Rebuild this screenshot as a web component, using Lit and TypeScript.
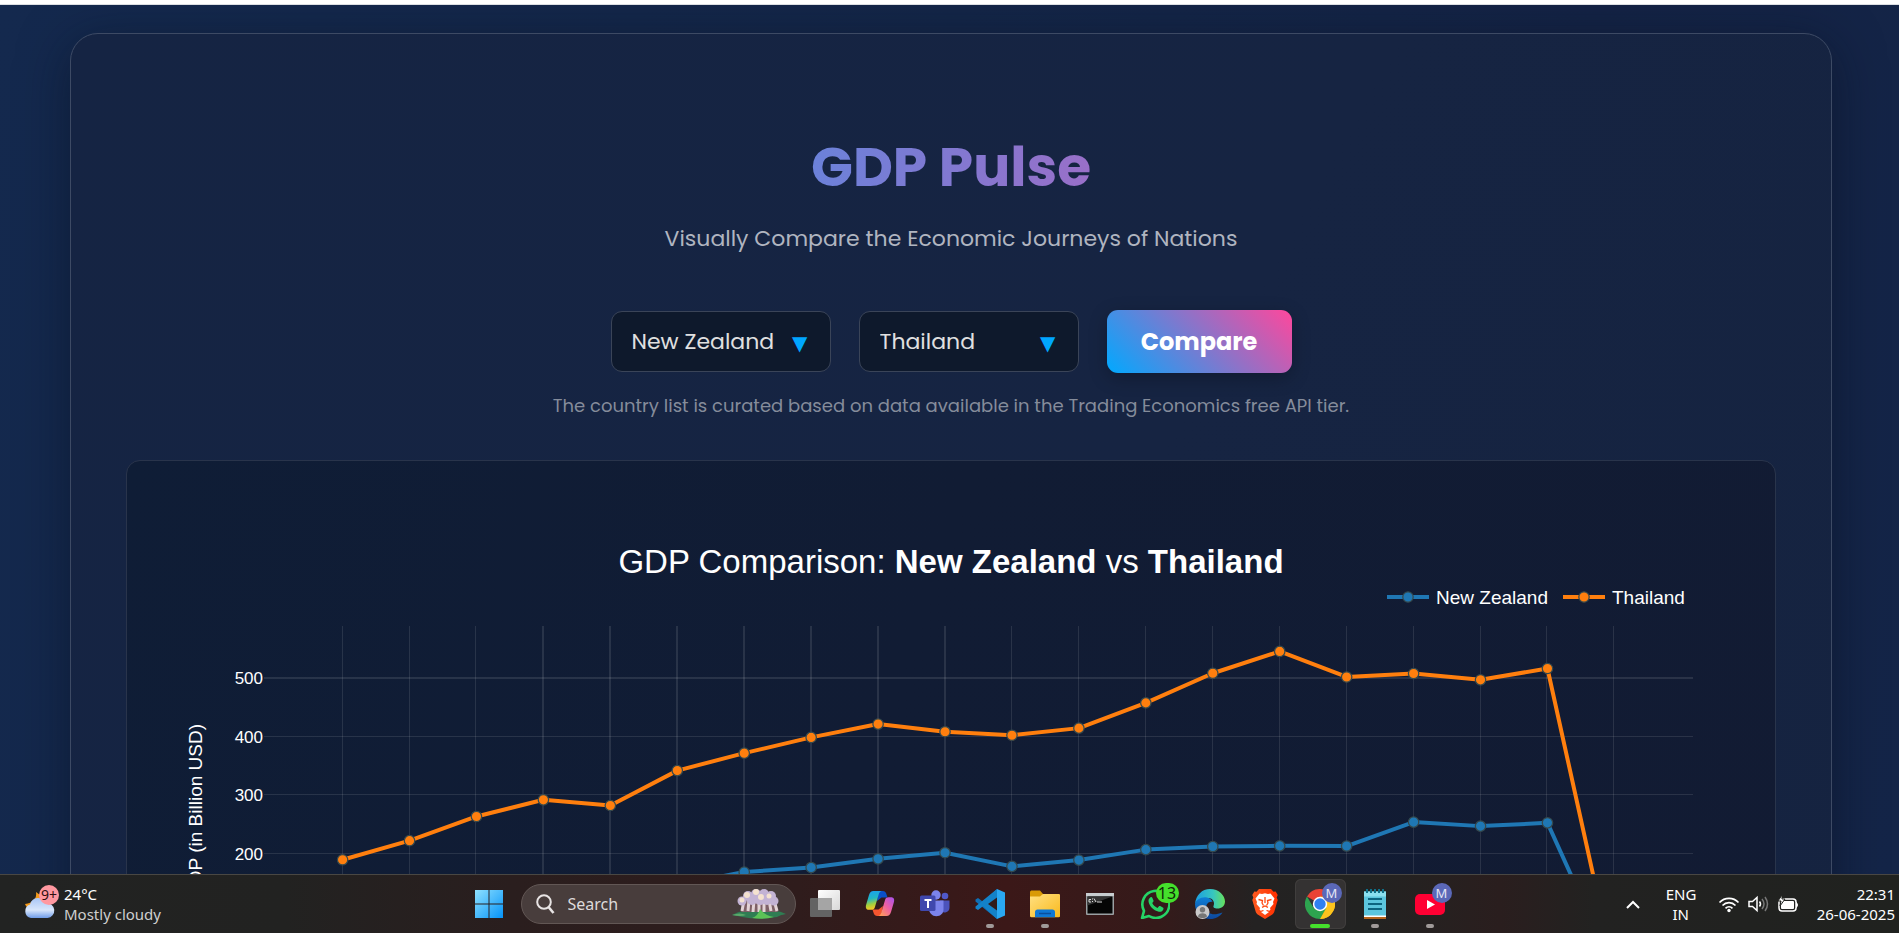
import { LitElement, html, css, svg, nothing } from "lit";
import { customElement, property, state } from "lit/decorators.js";

interface Series {
  name: string;
  color: string;
  values: number[];
}

const SERIES: Series[] = [
  {
    name: "New Zealand",
    color: "#1f77b4",
    values: [114.7, 111.6, 137.3, 133.1, 121.3, 146.5, 168.5, 176.2, 190.9, 201.3, 178.1, 188.8, 206.6, 211.9, 213, 212.7, 253.5, 246.6, 252.2, 0],
  },
  {
    name: "Thailand",
    color: "#ff7f0e",
    values: [189.3, 221.8, 263, 291.4, 281.7, 341.1, 370.8, 397.6, 420.3, 407.3, 401.3, 413.4, 456.4, 506.8, 544, 500.5, 506.3, 495.6, 514.9, 0],
  },
];

@customElement("gdp-chart")
export class GdpChart extends LitElement {
  @property({ attribute: false }) series: Series[] = [];
  @state() private w = 1648;
  private observer?: ResizeObserver;

  static styles = css`
    :host { display: block; }
    svg { display: block; width: 100%; height: 640px; font-family: "Liberation Sans", Arial, sans-serif; fill: #fff; }
    .title { font-size: 33px; }
    .strong { font-weight: 700; }
    .legend { font-size: 19px; }
    .tick { font-size: 17px; }
    .axis { font-size: 19px; }
    .grid { fill: rgba(255, 255, 255, 0.1); }
    .line { fill: none; stroke-width: 4; stroke-linejoin: round; }
    .dot { stroke: #35494d; stroke-width: 1.25; }
  `;

  connectedCallback() {
    super.connectedCallback();
    this.observer = new ResizeObserver(([e]) => (this.w = Math.round(e.contentRect.width)));
    this.observer.observe(this);
  }
  disconnectedCallback() {
    super.disconnectedCallback();
    this.observer?.disconnect();
  }

  render() {
    const left = 137;
    const right = this.w - 82;
    const top = 165;
    const zero = 510;
    const unit = 0.5875;
    const inset = (right - left) * 0.055;
    const step = (right - left - inset * 2) / 19;
    const x = (i: number) => left + inset + i * step;
    const y = (v: number) => zero - v * unit;
    const years = [...Array(20).keys()];
    const lx = this.w - 388;
    return html`<svg role="img" aria-label="GDP comparison line chart">
      <text class="title" x=${this.w / 2} y="112" text-anchor="middle">GDP Comparison: <tspan class="strong">${this.series[0].name}</tspan> vs <tspan class="strong">${this.series[1].name}</tspan></text>
      ${years.map((i) => svg`<rect class="grid" x=${Math.floor(x(i) - 0.5)} y=${top} width=${i > 2 && i < 10 ? 2 : 1} height=${zero - top}></rect>`)}
      ${[0, 100, 200, 300, 400, 500].map((v) => svg`
        <rect class="grid" x=${left} y=${Math.floor(y(v))} width=${right - left} height=${v === 500 ? 2 : 1}></rect>
        <text class="tick" x=${left - 1} y=${Math.floor(y(v)) + 7} text-anchor="end">${v}</text>`)}
      ${this.series.map((s) => svg`
        <polyline class="line" stroke=${s.color} points=${s.values.map((v, i) => `${x(i)},${y(v)}`).join(" ")}></polyline>
        ${s.values.map((v, i) => svg`<circle class="dot" cx=${x(i)} cy=${y(v)} r="5.2" fill=${s.color}></circle>`)}`)}
      ${this.series.map((s, i) => svg`
        <g transform="translate(${lx + i * 176},136)">
          <path class="line" stroke=${s.color} d="M0 0H42"></path>
          <circle class="dot" cx="21" cy="0" r="5.2" fill=${s.color}></circle>
          <text class="legend" x="49" y="7">${s.name}</text>
        </g>`)}
      <text class="axis" transform="translate(75,263) rotate(-90)" text-anchor="end">GDP (in Billion USD)</text>
    </svg>`;
  }
}

const ICONS = {
  start: svg`<defs><linearGradient id="g" x2="1" y2="1"><stop stop-color="#8fe1ff"/><stop offset="1" stop-color="#0593f8"/></linearGradient></defs>
    <path fill="url(#g)" d="M1 1h13.5v13.5H1zM15.500 1H29v13.500H15.500zM1 15.500h13.500V29H1zM15.500 15.500H29V29H15.500z"/>`,
  views: svg`<defs><linearGradient id="g" x2="1" y2="1"><stop stop-color="#fff"/><stop offset="1" stop-color="#d8d8d8"/></linearGradient></defs>
    <rect x="0" y="9" width="22" height="19" rx="1" fill="#636363"/><rect x="8" y="1" width="22" height="20" rx="1" fill="url(#g)"/><path d="M8 9h14v12H8z" fill="#a5a5a5"/>`,
  copilot: svg`<defs><linearGradient id="a" x2="0.2" y2="1"><stop stop-color="#199cf5"/><stop offset=".45" stop-color="#22b7c4"/><stop offset=".75" stop-color="#a4cf3c"/><stop offset="1" stop-color="#f6c525"/></linearGradient>
    <linearGradient id="b" x1="1" x2="0.1" y2="1"><stop stop-color="#a551f0"/><stop offset=".5" stop-color="#ee5fa2"/><stop offset="1" stop-color="#ffa254"/></linearGradient></defs>
    <path fill="#0a50c8" d="M13 2h4.500c2.500 0 3.500 1.500 4.200 4l.8 2.500h-6L12 12z"/>
    <path fill="#f4552f" d="M16 27h-3.500c-2.500 0-3.500-1.500-4.200-4L7.500 20.500h6L18 17z"/>
    <path fill="url(#a)" d="M8.500 2h8.200c-1.700.4-2.500 1.700-3.100 3.700L9.800 18.500c-.5 1.600-1.600 2.300-3.300 2.300H4C1 20.800.3 18.600 1.200 15.500L4 6c.9-2.800 2-4 4.500-4z"/>
    <path fill="url(#b)" d="M21.500 27h-8.200c1.700-.4 2.500-1.700 3.100-3.700l3.800-12.800c.5-1.600 1.600-2.300 3.300-2.300H26c3 0 3.700 2.200 2.800 5.300L26 23c-.9 2.800-2 4-4.500 4z"/>`,
  teams: svg`<circle cx="25" cy="7" r="3.300" fill="#5059c9"/><path d="M20 11.500h9.500v7a5 5 0 0 1-9 3z" fill="#4b53bc"/><circle cx="16" cy="6" r="4.700" fill="#7b83eb"/>
    <path d="M9 11.500h14.500v9c0 4-3.200 6.700-7.200 6.700S9 24 9 20z" fill="#7b83eb"/><rect x="0" y="6.500" width="15.500" height="15.500" rx="1.500" fill="#4048ad"/>
    <path d="M4.500 10h7v2H9v7H7v-7H4.500z" fill="#fff"/>`,
  code: svg`<path d="M22 0 8 12.700 3 9 .500 10.500v2L22 30z" fill="#0f6fb5"/><path d="M22 30 8 17.300 3 21 .500 19.500v-2L22 0z" fill="#1382c9"/><path d="M22 0l8 3.500v23L22 30z" fill="#2aa8f2"/><path d="M22 8.500V21.500L13 15z" fill="#301a1b"/>`,
  folder: svg`<path d="M0 3.500C0 2 .8 1.500 2 1.500h8l3 3.500h15c1.200 0 2 .6 2 2v4H0z" fill="#d99a06"/><defs><linearGradient id="g" x2="1" y2="1"><stop stop-color="#ffe082"/><stop offset="1" stop-color="#f9b91c"/></linearGradient></defs>
    <path d="M0 7.500h10l3-2.500h15.500c1 0 1.500.5 1.500 1.500V27c0 .8-.5 1.200-1.200 1.200H1.200C.5 28.200 0 27.800 0 27z" fill="url(#g)"/><path d="M5 28.200V23c0-1.500 1-2.500 2.500-2.500h15c1.500 0 2.500 1 2.500 2.500v5.200z" fill="#0f78d4"/><path d="M9 24.500h12" stroke="#0a4f9c" stroke-width="1.500"/>`,
  cmd: svg`<rect x="1" y="4" width="28" height="22" rx="1" fill="#9aa0a3"/><rect x="1" y="4" width="28" height="3" fill="#c8cdd0"/><rect x="2.500" y="7.500" width="25" height="17" fill="#050505"/><path d="M2.500 7.500h25l-25 9z" fill="#333"/><path d="M4 10.500h2M7.500 9.500v1M7.500 12v1M9 9.500l2 3.500M12 13h5M4 10.500V13h2" stroke="#ddd" fill="none"/>`,
  whatsapp: svg`<path d="M2 29l2-7.200A13.500 13.500 0 1 1 9 27z" fill="none" stroke="#25d366" stroke-width="2.600" stroke-linejoin="round"/><path d="M10.300 8.500c.7-.6 1.600-.5 2 .3l1.200 2.700c.2.600 0 1-.4 1.500l-.9 1.100c1.300 2.400 3 3.900 5.300 4.900l1.300-1.600c.4-.5.800-.6 1.400-.3l2.600 1.300c.8.400.8 1 .6 1.800-.6 1.900-2.600 2.900-4.600 2.500C13.300 21.400 9 16.700 8.500 12.200c-.1-1.500.6-2.800 1.800-3.700z" fill="#25d366"/>`,
  edge: svg`<defs><linearGradient id="a" x2="1"><stop stop-color="#1b9de2"/><stop offset=".6" stop-color="#37c6c0"/><stop offset="1" stop-color="#67e05c"/></linearGradient><linearGradient id="b" x2="0" y2="1"><stop stop-color="#0f7fd6"/><stop offset="1" stop-color="#0d479c"/></linearGradient></defs>
    <path d="M0 15C1 6 7 0 15 0c9 0 15 6.500 15 12.500 0 4.500-3.500 7-7.500 7-3.500 0-4.500-1.500-4-2.500 1.500-3 0-8-5.500-8C6.500 9 1 12 0 15z" fill="url(#a)"/>
    <path d="M0 15c1-4 6-7.500 12-6.500 3 .5 5 2.500 5.500 4.500-3.500-1-7 2-6 6.500C12.500 25 18 27 27.500 23.500 25 27.500 20.500 30 15.500 30 7 30 0 24 0 15z" fill="url(#b)"/>
    <circle cx="7.500" cy="23" r="7" fill="#c9c9c9"/><circle cx="7.500" cy="20.700" r="2.700" fill="#777"/><path d="M3 27.500c0-4.500 9-4.500 9 0-2 2-7 2-9 0z" fill="#777"/>`,
  brave: svg`<defs><linearGradient id="g" x2="1"><stop stop-color="#ff5a1f"/><stop offset="1" stop-color="#ff2f00"/></linearGradient></defs>
    <path d="M9 0h12l2.500 2.800 2.200-.3 2 3.500-1 2.500 1 2.500-3.500 12c-.4 1.300-1.300 2-2.300 2.800L15 30l-6.900-4.200c-1-.8-1.900-1.500-2.300-2.800L2.300 11l1-2.500-1-2.500 2-3.500 2.200.3z" fill="url(#g)"/>
    <path d="M9.500 4.500 12 5l3-.7 3 .7 2.500-.5 4 5-1.500 3.500.5 2-3.500 4 .5 1.500-1.200 1.300-2.300-.8L15 23l-2-2-2.300.8-1.200-1.300.5-1.500-3.500-4 .5-2-1.500-3.500z" fill="#fff"/><path d="M15 8v6M8.500 10.500l4 1-.5 2.500 1.500 2.500M21.500 10.500l-4 1 .5 2.500-1.500 2.500M12 18.300l3-1.300 3 1.300" stroke="#ff4a12" stroke-width="1.300" fill="none"/><path d="M11 23l4-1.500 4 1.500-4 3z" fill="#fff"/>`,
  chrome: svg`<path d="M15 15 2 7.500A15 15 0 0 1 28 7.500z" fill="#ea4335"/><path d="M15 15 28 7.500A15 15 0 0 1 15 30z" fill="#fbbc05"/><path d="M28 7.500H15L22 19 15 30A15 15 0 0 0 28 7.500z" fill="#fcc31e"/><path d="M2 7.500 8.700 19 15 22l6.300-3.300L15 30A15 15 0 0 1 2 7.500z" fill="#2da44f"/><circle cx="15" cy="15" r="7.200" fill="#fff"/><circle cx="15" cy="15" r="5.700" fill="#2f80f0"/>`,
  notepad: svg`<path d="M4 2.500h22V28H4z" fill="#5cc6de"/><path d="M4 2.500h22v5H4z" fill="#8be0ef"/><path d="M4 26.500h22V28H4z" fill="#fff"/><path d="M4 28h22v2H4z" fill="#b5651d"/><path d="M8 10h14M8 15h14M8 20h14" stroke="#0d6580" stroke-width="2"/><path d="M7 0v4M11 0v4M15 0v4M19 0v4M23 0v4" stroke="#0f6f88" stroke-width="2"/>`,
  youtube: svg`<rect x="0" y="5" width="30" height="21" rx="5" fill="#ff0033"/><path d="M12 11v9l8-4.500z" fill="#fff"/>`,
};

interface App {
  name: string;
  icon: keyof typeof ICONS;
  running?: boolean;
  active?: boolean;
  badge?: string;
  tone?: string;
}

const APPS: App[] = [
  { name: "Task View", icon: "views" },
  { name: "Copilot", icon: "copilot" },
  { name: "Teams", icon: "teams" },
  { name: "Visual Studio Code", icon: "code", running: true },
  { name: "File Explorer", icon: "folder", running: true },
  { name: "Command Prompt", icon: "cmd" },
  { name: "WhatsApp", icon: "whatsapp", badge: "13", tone: "green" },
  { name: "Edge", icon: "edge" },
  { name: "Brave", icon: "brave" },
  { name: "Chrome", icon: "chrome", active: true, badge: "M", tone: "violet" },
  { name: "Notepad", icon: "notepad", running: true },
  { name: "YouTube", icon: "youtube", running: true, badge: "M", tone: "violet" },
];

@customElement("task-icon")
export class TaskIcon extends LitElement {
  @property() name: keyof typeof ICONS = "start";
  static styles = css`
    :host { display: block; width: 30px; height: 30px; }
    svg { display: block; }
  `;
  render() {
    return html`<svg width="30" height="30" viewBox="0 0 30 30" aria-hidden="true">${ICONS[this.name]}</svg>`;
  }
}

@customElement("task-bar")
export class TaskBar extends LitElement {
  static styles = css`
    :host { display: grid; grid-template-columns: 1fr auto 1fr; align-items: center; height: 58px; border-top: 1px solid #494743; color: #fff;
      background: linear-gradient(90deg, #222322 0%, #222221 15%, #2a1e1e 27%, #2f1c1c 42%, #3b1818 53%, #351a1a 61%, #242222 66%, #222322 72%, #2a1e1e 79%, #222221 84%, #20221f 100%);
      font: 15px/20px "Noto Sans", "Segoe UI", sans-serif; }
    button { border: 0; padding: 0; margin: 0; background: none; color: inherit; font: inherit; }
    .weather { display: flex; align-items: center; gap: 4px; margin-left: 24px; justify-self: start; text-align: left; }
    .weather svg { display: block; }
    .muted { color: #cfcfcf; }
    .badge-text { font-size: 14px; fill: #301010; }
    .center { display: flex; align-items: center; padding-left: 32px; }
    .start { width: 30px; margin-right: 17px; }
    .search { display: flex; align-items: center; box-sizing: border-box; width: 275px; height: 40px; border: 1px solid #625755; border-radius: 20px; background: #483d3c; padding: 0 9px 0 14px; margin-right: 2px; }
    .search input { flex: 1; min-width: 0; border: 0; background: none; color: #dedada; font: inherit; font-size: 16px; padding: 0 0 0 13px; outline: none; }
    .search input::placeholder { color: #dedada; opacity: 1; }
    .app { position: relative; display: grid; place-items: center; width: 51px; height: 50px; margin: 0 2px; border-radius: 6px; }
    .active { background: #343232; box-shadow: inset 0 0 0 1px #403e3d; }
    .app::after { content: ""; position: absolute; bottom: 1px; left: 50%; margin-left: -4px; width: 8px; height: 4px; border-radius: 2px; background: transparent; }
    .running::after { background: #a09a99; }
    .active::after { width: 20px; margin-left: -10px; background: #45e02c; }
    .badge { position: absolute; top: 4px; right: 4px; min-width: 20px; height: 20px; border-radius: 10px; text-align: center; }
    .green { right: 2px; min-width: 23px; background: #45e02c; color: #102808; font-size: 16px; }
    .violet { background: #5b68b8; color: #e4e4f4; font-size: 13px; }
    .tray { display: flex; align-items: center; justify-self: end; margin-right: 4px; }
    .chev { margin-right: 25px; }
    .lang { text-align: center; width: 30px; margin-right: 22px; }
    .status { display: flex; gap: 8px; margin-right: 18px; }
    .status svg { display: block; }
    .clock { text-align: right; }
  `;

  render() {
    return html`
      <button class="weather">
        <svg width="36" height="38" viewBox="0 4 36 38" aria-hidden="true">
          <defs><linearGradient id="c" x2="0" y2="1"><stop stop-color="#a9c6f5"/><stop offset=".6" stop-color="#d8e6fb"/><stop offset="1" stop-color="#6f9ce8"/></linearGradient></defs>
          <path d="M12 11c1 7-3 11-11 12 2 5 7 7 12 6 6-1 9-6 7-12z" fill="#f39a1c"/>
          <path d="M7 37a7 7 0 0 1-1-13.500A8.500 8.500 0 0 1 22 22a7.500 7.500 0 0 1 1.500 15z" fill="url(#c)"/>
          <circle cx="25" cy="14" r="10" fill="#ff98a0"/>
          <text class="badge-text" x="25" y="19" text-anchor="middle">9+</text>
        </svg>
        <span>24°C<br /><span class="muted">Mostly cloudy</span></span>
      </button>
      <div class="center">
        <button class="start" aria-label="Start"><task-icon name="start"></task-icon></button>
        <label class="search">
          <svg width="19" height="20" viewBox="0 0 19 20" fill="none" stroke="#e8e4e4" stroke-width="2" aria-hidden="true"><circle cx="8" cy="8" r="6.800"/><path d="M12.500 13l5 6" stroke-width="2.600"/></svg>
          <input type="text" placeholder="Search" aria-label="Search" />
          <svg width="54" height="32" viewBox="0 0 54 32" aria-hidden="true">
            <path d="M0 27q10-6 27-6t27 5q-6 1-9 3-18 3-35 0-4-1-10-2z" fill="#2f7d53"/>
            <path d="M11 12h33l2 12-37 0z" fill="#7d6066"/>
            <path d="M12 12l-2 11M17 12l-1 11M22 12l-1 12M27 12v12M32 12v12M37 12l2 11M42 12l3 11" stroke="#e3d3d6" stroke-width="3"/>
            <g fill="#c3b3d4"><circle cx="10" cy="13" r="4.500"/><circle cx="16" cy="8" r="5"/><circle cx="24" cy="6" r="5"/><circle cx="32" cy="6" r="5"/><circle cx="39" cy="8" r="5"/><circle cx="42" cy="13" r="4.500"/><circle cx="28" cy="11" r="6"/><circle cx="20" cy="12" r="5"/><circle cx="35" cy="12" r="5"/></g>
            <g fill="#f4e2cf"><circle cx="15" cy="7" r="3"/><circle cx="24" cy="4" r="3"/><circle cx="10" cy="12" r="2.500"/><circle cx="29" cy="9" r="3"/><circle cx="37" cy="8" r="2.500"/></g>
            <path d="M20 30q6-2 8-9 4 6 14 8-10 3-22 1z" fill="#5cc257"/><path d="M0 27q8-3 14 0-5 2-14 0z" fill="#5ba96a"/>
          </svg>
        </label>
        ${APPS.map((a) => html`<button class="app ${a.active ? "active" : ""} ${a.running ? "running" : ""}" aria-label=${a.name}>
          <task-icon name=${a.icon}></task-icon>
          ${a.badge ? html`<span class="badge ${a.tone}">${a.badge}</span>` : nothing}
        </button>`)}
      </div>
      <div class="tray">
        <button class="chev" aria-label="Show hidden icons"><svg width="16" height="10" viewBox="0 0 16 10" fill="none" stroke="#fff" stroke-width="2"><path d="M2 8l6-6 6 6"/></svg></button>
        <button class="lang">ENG<br />IN</button>
        <button class="status" aria-label="Network, volume and battery">
          <svg width="22" height="18" viewBox="0 0 22 18" fill="none" stroke="#fff" stroke-width="1.700"><path d="M1.500 7.500a13 13 0 0 1 19 0M4.500 10.500a9 9 0 0 1 13 0M7.500 13.300a5 5 0 0 1 7 0"/><circle cx="11" cy="15.500" r="1.700" fill="#fff" stroke="none"/></svg>
          <svg width="21" height="18" viewBox="0 0 21 18" fill="none" stroke="#fff" stroke-width="1.500"><path d="M1 6.500h3.500L9 2.500v13l-4.500-4H1z"/><path d="M11.500 6.500q2 2.500 0 5"/><path d="M14 4q4 5 0 10M17 2q5 7 0 14" stroke="#777"/></svg>
          <svg width="22" height="18" viewBox="0 0 22 18"><rect x="2" y="4" width="17" height="12" rx="3" fill="none" stroke="#fff" stroke-width="1.500"/><rect x="4" y="6" width="13" height="8" rx="1" fill="#fff"/><path d="M19.500 7.500q2 2.500 0 5z" fill="#fff" stroke="#fff"/><path d="M5 0L1 6h3L3 11l5-7H5z" fill="#fff" stroke="#20221f"/></svg>
        </button>
        <button class="clock">22:31<br />26-06-2025</button>
      </div>
    `;
  }
}

@customElement("app-root")
export class AppRoot extends LitElement {
  @state() private pair = ["New Zealand", "Thailand"];

  static styles = css`
    :host { display: flex; flex-direction: column; height: 100vh; overflow: hidden; font-family: Poppins, Inter, sans-serif; }
    .edge { flex: none; height: 4px; background: #fff; border-bottom: 1px solid #dcdfe3; }
    .page { flex: 1; min-height: 0; overflow-y: auto; scrollbar-width: none; background: linear-gradient(105deg, #14294e 0%, #142648 45%, #142345 75%, #142548 100%); padding: 28px 67px 0 70px; }
    .card { box-sizing: border-box; border: 1px solid #3d4a64; border-radius: 28px; padding: 95px 55px 60px; background: linear-gradient(120deg, #152443 0%, #162442 55%, #152340 100%); box-shadow: 0 10px 50px rgba(8, 16, 32, 0.5); text-align: center; }
    h1 { width: max-content; margin: 0 auto; font-size: 55px; line-height: 76px; font-weight: 700; color: transparent; background: linear-gradient(100deg, #6a82da, #9a6fc8); background-clip: text; -webkit-background-clip: text; }
    .tagline { margin: 18px 0 0; font-size: 22px; line-height: 32px; color: #b0b5c0; }
    .controls { display: flex; justify-content: center; align-items: center; gap: 28px; margin-top: 55px; }
    .pick { position: relative; }
    .pick::after { content: "▼"; position: absolute; right: 23px; top: 18px; font: 20px/28px "DejaVu Sans", sans-serif; color: #00a6ff; pointer-events: none; }
    select { appearance: none; box-sizing: border-box; width: 220px; height: 61px; padding: 0 20px; border: 1px solid #3a4458; border-radius: 11px; background: #0e192c; color: #e0e0e0; font: 22px Poppins, Inter, sans-serif; }
    .go { box-sizing: border-box; width: 185px; height: 63px; border: 0; border-radius: 11px; color: #fff; font: 700 24px Poppins, Inter, sans-serif; background: linear-gradient(45deg, #00a9ff, #ff479c); box-shadow: 0 5px 18px rgba(0, 0, 0, 0.25); }
    .note { margin: 19px 0 0; font-size: 18px; line-height: 28px; color: #858c9b; }
    .panel { margin-top: 40px; border: 1px solid #29344b; border-radius: 14px; background: linear-gradient(110deg, #0f1d36 0%, #111c34 45%, #121b33 100%); }
  `;

  private choose(i: number, e: Event) {
    const next = [...this.pair];
    next[i] = (e.target as HTMLSelectElement).value;
    this.pair = next;
  }

  render() {
    return html`
      <div class="edge"></div>
      <main class="page">
        <section class="card">
          <h1>GDP Pulse</h1>
          <p class="tagline">Visually Compare the Economic Journeys of Nations</p>
          <div class="controls">
            ${this.pair.map((p, i) => html`<div class="pick">
              <select aria-label="Country ${i + 1}" @change=${(e: Event) => this.choose(i, e)}>
                ${SERIES.map((s) => html`<option ?selected=${s.name === p}>${s.name}</option>`)}
              </select>
            </div>`)}
            <button class="go">Compare</button>
          </div>
          <p class="note">The country list is curated based on data available in the Trading Economics free API tier.</p>
          <div class="panel"><gdp-chart .series=${SERIES}></gdp-chart></div>
        </section>
      </main>
      <task-bar></task-bar>
    `;
  }
}
